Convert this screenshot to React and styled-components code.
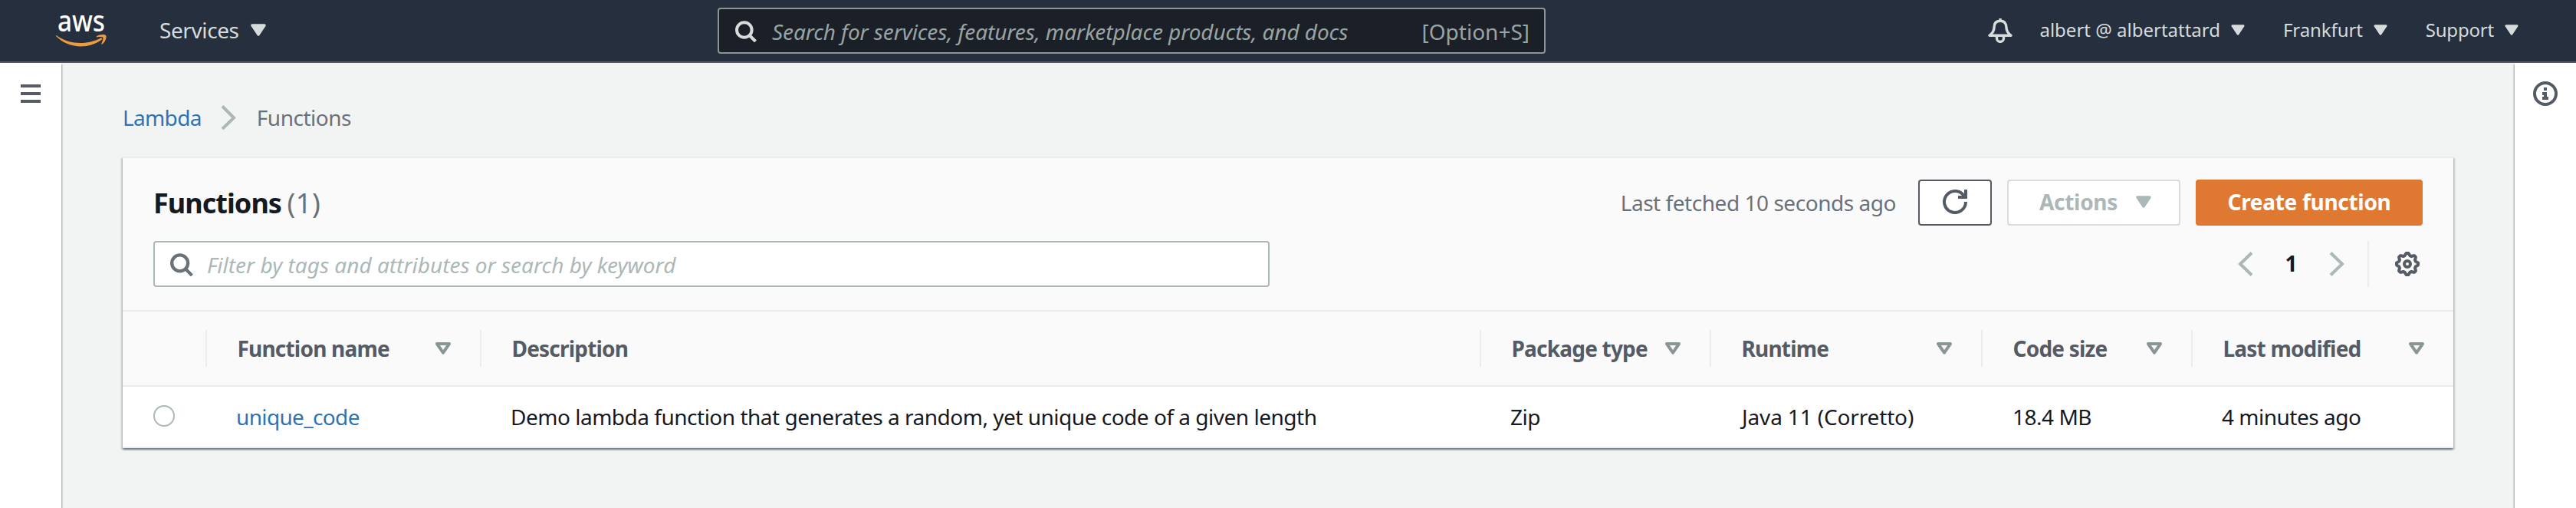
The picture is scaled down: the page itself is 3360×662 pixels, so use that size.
import React from "react";
import styled, { createGlobalStyle } from "styled-components";

const GlobalStyle = createGlobalStyle`
  *, *::before, *::after { box-sizing: border-box; }
  body {
    margin: 0;
    background: #f2f3f3;
    color: #16191f;
    font-family: "Noto Sans", "Open Sans", sans-serif;
    font-size: 28px;
    line-height: 40px;
  }
  svg { display: block; flex: none; }
`;

const Page = styled.div`
  display: flex;
  flex-direction: column;
  height: 662px;
  overflow: hidden;
`;

/* ---------- Navigation bar ---------- */

const NavBar = styled.header`
  display: flex;
  align-items: center;
  flex: none;
  height: 82px;
  padding: 0 75px 0 72px;
  background: #262f3e;
  border-bottom: 2px solid #555b65;
  color: #d6dbdb;
`;

const NavSide = styled.div`
  display: flex;
  align-items: center;
  flex: none;
  width: ${(p) => p.$width}px;
`;

const NavItem = styled.div`
  display: flex;
  align-items: center;
  white-space: nowrap;
  gap: ${(p) => p.$gap}px;
  margin-left: ${(p) => p.$offset || 0}px;
  padding-bottom: 2px;
  font-size: ${(p) => p.$size}px;
  letter-spacing: ${(p) => p.$tracking || 0}px;
`;

const NavSearch = styled.div`
  display: flex;
  align-items: center;
  flex: none;
  width: 1080px;
  height: 60px;
  padding: 2px 19px 0 21px;
  background: #1b1f27;
  border: 2px solid #8a9595;
  border-radius: 4px;
  color: #98a4a4;
`;

const Placeholder = styled.span`
  flex: 1;
  margin-left: ${(p) => p.$offset}px;
  font-style: italic;
  white-space: nowrap;
  letter-spacing: ${(p) => p.$tracking || 0}px;
`;

const NavRight = styled.div`
  display: flex;
  align-items: center;
  flex: 1;
  justify-content: flex-end;
`;

/* ---------- Page body ---------- */

const Body = styled.div`
  display: flex;
  flex: 1;
  min-height: 0;
`;

const SidePanel = styled.aside`
  display: flex;
  justify-content: center;
  align-items: flex-start;
  flex: none;
  width: 80px;
  padding-top: ${(p) => p.$top}px;
  background: #fff;
  box-shadow: ${(p) => (p.$right ? "-1px" : "1px")} 2px 2px rgba(0, 28, 36, 0.38);
`;

const Content = styled.main`
  flex: 1;
  min-width: 0;
  padding: 51px 80px 0;
`;

const Breadcrumbs = styled.nav`
  display: flex;
  align-items: center;
  height: 40px;
  margin-bottom: 31px;
  color: #6a7179;
  letter-spacing: -0.5px;
`;

const Link = styled.a`
  color: #2e73b8;
  letter-spacing: -0.65px;
`;

const Card = styled.section`
  background: #fff;
  border-top: 2px solid #eaeded;
  border-bottom: 2px solid #eaeded;
  box-shadow:
    0 2px 2px rgba(0, 28, 36, 0.36),
    2px 2px 2px rgba(0, 28, 36, 0.16),
    -2px 2px 2px rgba(0, 28, 36, 0.16);
`;

const CardHeader = styled.div`
  height: 200px;
  padding: 28px 40px 0;
  background: #fafafa;
  border-bottom: 2px solid #eaeded;
`;

const HeaderRow = styled.div`
  display: flex;
  align-items: center;
  justify-content: space-between;
  height: 60px;
  margin-bottom: 20px;
`;

const Title = styled.h1`
  margin: 0;
  padding-top: 2px;
  font-size: 36px;
  font-weight: 700;
  letter-spacing: -0.95px;
`;

const Counter = styled.span`
  margin-left: -1px;
  color: #6a7179;
  font-weight: 400;
  letter-spacing: 0.6px;
`;

const Actions = styled.div`
  display: flex;
  align-items: center;
  gap: 20px;
`;

const FetchedAt = styled.span`
  margin-right: 9px;
  padding-bottom: 1px;
  color: #6a7179;
  letter-spacing: -0.46px;
  white-space: nowrap;
`;

const buttonTones = {
  normal: "background:#fff;border-color:#555b65;color:#555b65;",
  disabled: "padding-left:4px;background:#fff;border-color:#d6dbdb;color:#acb8b8;",
  primary: "background:#df7931;border-color:#df7931;color:#fff;",
};

const Button = styled.button`
  display: flex;
  align-items: center;
  justify-content: center;
  width: ${(p) => p.$width}px;
  height: 60px;
  padding: 0 0 2px;
  gap: 24px;
  border: 2px solid;
  border-radius: 4px;
  font: inherit;
  font-weight: 700;
  letter-spacing: ${(p) => p.$tracking || 0}px;
  white-space: nowrap;
  ${(p) => buttonTones[p.$tone]}
`;

const FilterInput = styled.div`
  display: flex;
  align-items: center;
  width: 1456px;
  height: 60px;
  padding: 2px 20px 0;
  background: #fff;
  border: 2px solid #acb8b8;
  border-radius: 4px;
  color: #acb8b8;
`;

const Pager = styled.div`
  display: flex;
  align-items: center;
  height: 60px;
  padding-right: 4px;
`;

const PageNumber = styled.span`
  width: 99px;
  padding-bottom: 2px;
  font-weight: 700;
  text-align: center;
`;

const PagerDivider = styled.span`
  width: 2px;
  height: 60px;
  margin: 0 34px 0 30px;
  background: #eaeded;
`;

/* ---------- Table ---------- */

const TableRow = styled.div`
  display: grid;
  grid-template-columns: 110px 358px 1304px 300px 354px 274px 340px;
  align-items: center;
  height: ${(p) => (p.$head ? 98 : 78)}px;
  background: ${(p) => (p.$head ? "#fafafa" : "#fff")};
  border-bottom: ${(p) => (p.$head ? "2px solid #eaeded" : "none")};
`;

const HeadCell = styled.div`
  display: flex;
  align-items: center;
  justify-content: space-between;
  height: 48px;
  padding: 0 38px 1px 39.5px;
  border-right: ${(p) => (p.$last ? "none" : "2px solid #eaeded")};
  color: #555b65;
  font-weight: 700;
  letter-spacing: -0.8px;
  white-space: nowrap;
`;

const Cell = styled.div`
  display: flex;
  align-items: center;
  padding-left: ${(p) => p.$pad || 38}px;
  letter-spacing: ${(p) => p.$tracking ?? -0.49}px;
  white-space: nowrap;
`;

const Radio = styled.span`
  width: 28px;
  height: 28px;
  margin-bottom: 2px;
  border: 2px solid #acb8b8;
  border-radius: 50%;
  background: #fff;
`;

/* ---------- Icons ---------- */

const Caret = ({ width = 20, height = 16 }) => (
  <svg width={width} height={height} viewBox="0 0 20 16">
    <path d="M2 2h16l-8 12z" fill="currentColor" stroke="currentColor" strokeWidth="3.4" strokeLinejoin="round" />
  </svg>
);

const SortIcon = () => (
  <svg width="20" height="16" viewBox="0 0 20 16">
    <path d="M2 2h16l-8 11.6z" fill="none" stroke="#8a9595" strokeWidth="4" strokeLinejoin="round" />
  </svg>
);

const SearchIcon = ({ color, size = 28 }) => (
  <svg width={size} height={size} viewBox="0 0 28 28" fill="none" stroke={color} strokeWidth="4">
    <circle cx="11.8" cy="12" r="9.8" />
    <path d="M18.5 19l8 8" />
  </svg>
);

const Chevron = ({ left }) => (
  <svg width="20" height="32" viewBox="0 0 20 32" fill="none" stroke="#acb8b8" strokeWidth="4">
    <path d={left ? "M18 1.5L3 16l15 14.5" : "M2 1.5L17 16L2 30.5"} />
  </svg>
);

const AwsLogo = () => (
  <svg width="70" height="80" viewBox="0 -15 70 80" overflow="visible">
    <text x="3" y="25.7" fill="#fff" fontSize="38" fontWeight="500" textLength="62" lengthAdjust="spacingAndGlyphs">
      aws
    </text>
    <path
      d="M1.5 31C11 38 22 41 33 41C43 41 52 38.500 59.500 34.500C61 34 62 35.500 60.500 36.800C53 42.500 43 45.500 33.500 45.500C21 45.500 9.500 40.500 1.500 32.500C0.800 31.500 1 30.700 1.500 31Z"
      fill="#ec9b3d"
    />
    <path
      d="M54 32.200C58 29.500 64 29.500 66 31C67.500 32.500 66 39 61.500 42.500C60.700 43 60 42.700 60.400 41.800C61.500 39.300 63.200 35 62.200 33.800C61.200 32.700 57 33.200 54.700 33.400C53.800 33.500 53.500 32.800 54 32.200Z"
      fill="#ec9b3d"
    />
  </svg>
);

const BellIcon = () => (
  <svg width="32" height="32" viewBox="0 0 32 32" fill="none" stroke="currentColor" strokeWidth="3.4" strokeLinejoin="round">
    <path d="M16 3.300C10 3.300 8 7.500 8 12C8 17 5.500 19.500 2 22.300H30C26.500 19.500 24 17 24 12C24 7.500 22 3.300 16 3.300Z" />
    <path d="M16 0V4" />
    <path d="M11.500 22.500V26C11.500 28.500 13.500 30.400 16 30.400C18.500 30.400 20.500 28.500 20.500 26V22.500" />
  </svg>
);

const MenuIcon = () => (
  <svg width="26" height="24" viewBox="0 0 26 24" fill="#555b65">
    <path d="M0 0h26v4H0zM0 10h26v4H0zM0 20h26v4H0z" />
  </svg>
);

const InfoIcon = () => (
  <svg width="32" height="32" viewBox="0 0 32 32">
    <circle cx="16" cy="16" r="14" fill="none" stroke="#555b65" strokeWidth="4" />
    <path d="M14 8h4v4h-4zM12 14h6v6h2v4h-8v-4h2v-2h-2z" fill="#555b65" />
  </svg>
);

const RefreshIcon = () => (
  <svg width="32" height="32" viewBox="0 0 32 32" fill="none" stroke="currentColor" strokeWidth="4">
    <path d="M30 16A14 14 0 1 1 27.500 8" />
    <path d="M30 0V10H20" />
  </svg>
);

const gearPath = (() => {
  const points = [];
  for (let i = 0; i < 64; i += 1) {
    const angle = (i / 64) * Math.PI * 2;
    const radius = 12.7 + 1.5 * Math.tanh(2.2 * Math.cos(angle * 8));
    points.push(`${(16 + radius * Math.cos(angle)).toFixed(2)} ${(16 + radius * Math.sin(angle)).toFixed(2)}`);
  }
  return `M${points.join("L")}Z`;
})();

const GearIcon = () => (
  <svg width="32" height="32" viewBox="0 0 32 32" fill="none" stroke="#555b65" strokeWidth="4" strokeLinejoin="round">
    <path d={gearPath} />
    <circle cx="16" cy="16" r="4" />
  </svg>
);

/* ---------- Data ---------- */

const columns = [
  { label: "Function name", sortable: true },
  { label: "Description", sortable: false },
  { label: "Package type", sortable: true },
  { label: "Runtime", sortable: true },
  { label: "Code size", sortable: true },
  { label: "Last modified", sortable: true },
];

const functions = [
  {
    name: "unique_code",
    description: "Demo lambda function that generates a random, yet unique code of a given length",
    packageType: "Zip",
    runtime: "Java 11 (Corretto)",
    codeSize: "18.4 MB",
    modified: "4 minutes ago",
  },
];

export default function App() {
  return (
    <Page>
      <GlobalStyle />
      <NavBar>
        <NavSide $width={864}>
          <AwsLogo />
          <NavItem $size={28} $gap={15} $offset={66} $tracking={-0.4}>
            Services <Caret />
          </NavItem>
        </NavSide>
        <NavSearch>
          <SearchIcon color="#d6dbdb" />
          <Placeholder $offset={20} $tracking={-0.1}>
            Search for services, features, marketplace products, and docs
          </Placeholder>
          <span>[Option+S]</span>
        </NavSearch>
        <NavRight>
          <BellIcon />
          <NavItem $size={24} $gap={14} $offset={35}>
            albert @ albertattard <Caret width={18} height={14} />
          </NavItem>
          <NavItem $size={24} $gap={14} $offset={50} $tracking={-0.1}>
            Frankfurt <Caret width={18} height={14} />
          </NavItem>
          <NavItem $size={24} $gap={14} $offset={50} $tracking={-0.2}>
            Support <Caret width={18} height={14} />
          </NavItem>
        </NavRight>
      </NavBar>
      <Body>
        <SidePanel $top={28}>
          <MenuIcon />
        </SidePanel>
        <Content>
          <Breadcrumbs>
            <Link>Lambda</Link>
            <svg width="72" height="32" viewBox="0 0 72 32" fill="none" stroke="#acb8b8" strokeWidth="4">
              <path d="M27 1.500L42 16.500L27 31" />
            </svg>
            <span>Functions</span>
          </Breadcrumbs>
          <Card>
            <CardHeader>
              <HeaderRow>
                <Title>
                  Functions <Counter>(1)</Counter>
                </Title>
                <Actions>
                  <FetchedAt>Last fetched 10 seconds ago</FetchedAt>
                  <Button $tone="normal" $width={96}>
                    <RefreshIcon />
                  </Button>
                  <Button $tone="disabled" $width={226} $tracking={-0.3}>
                    Actions <Caret />
                  </Button>
                  <Button $tone="primary" $width={296} $tracking={-0.3}>
                    Create function
                  </Button>
                </Actions>
              </HeaderRow>
              <HeaderRow>
                <FilterInput>
                  <SearchIcon color="#6a7179" size={30} />
                  <Placeholder $offset={18}>Filter by tags and attributes or search by keyword</Placeholder>
                </FilterInput>
                <Pager>
                  <Chevron left />
                  <PageNumber>1</PageNumber>
                  <Chevron />
                  <PagerDivider />
                  <GearIcon />
                </Pager>
              </HeaderRow>
            </CardHeader>
            <TableRow $head>
              <HeadCell />
              {columns.map((column, index) => (
                <HeadCell key={column.label} $last={index === columns.length - 1}>
                  {column.label}
                  {column.sortable && <SortIcon />}
                </HeadCell>
              ))}
            </TableRow>
            {functions.map((fn) => (
              <TableRow key={fn.name}>
                <Cell $pad={40}>
                  <Radio />
                </Cell>
                <Cell>
                  <Link>{fn.name}</Link>
                </Cell>
                <Cell>{fn.description}</Cell>
                <Cell>{fn.packageType}</Cell>
                <Cell $pad={40} $tracking={-0.15}>{fn.runtime}</Cell>
                <Cell $pad={39}>{fn.codeSize}</Cell>
                <Cell>{fn.modified}</Cell>
              </TableRow>
            ))}
          </Card>
        </Content>
        <SidePanel $right $top={24}>
          <InfoIcon />
        </SidePanel>
      </Body>
    </Page>
  );
}
